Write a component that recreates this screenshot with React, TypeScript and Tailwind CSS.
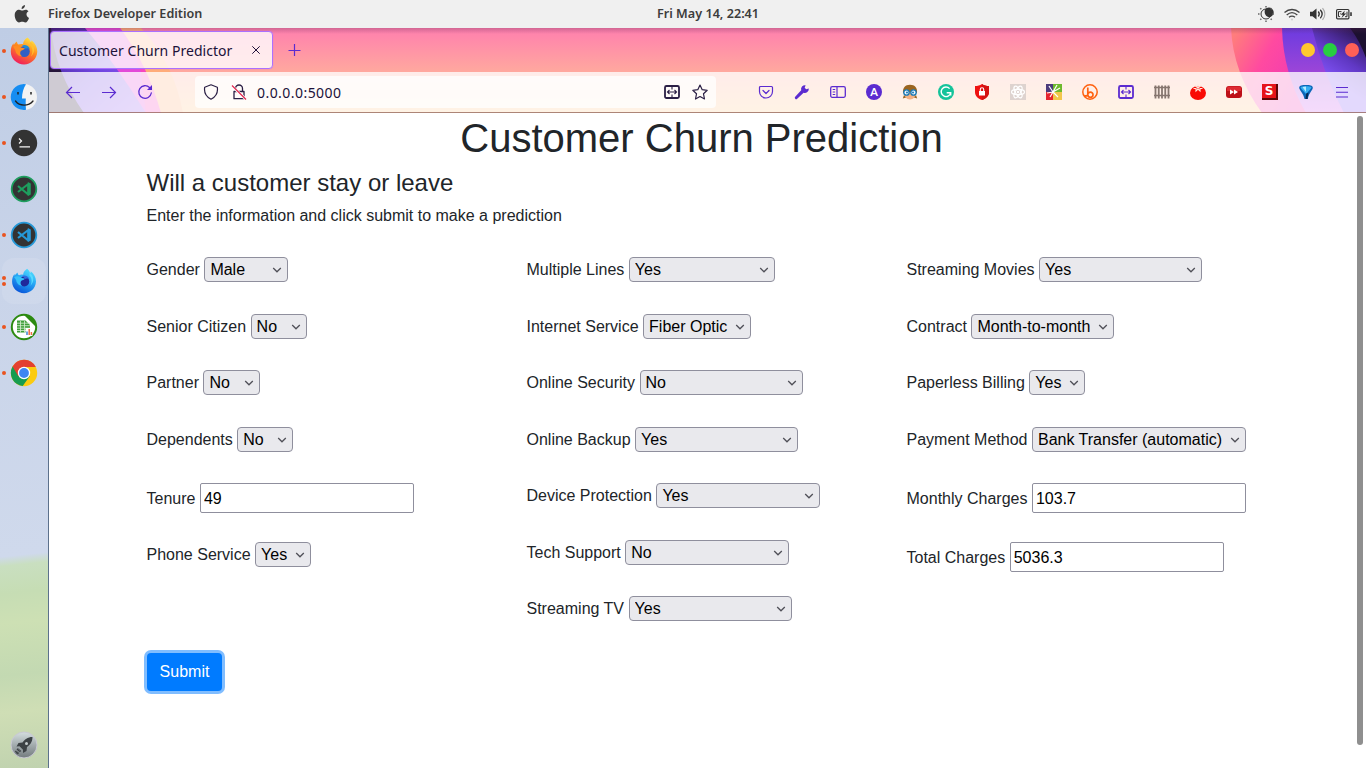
import type { ReactNode } from "react";

const ink = "#5b2bd0";

function Svg({ size = 16, vb = "0 0 16 16", children, className = "" }: { size?: number; vb?: string; children: ReactNode; className?: string }) {
  return (
    <svg width={size} height={size} viewBox={vb} fill="none" className={"shrink-0 " + className}>
      {children}
    </svg>
  );
}

function TopBar() {
  return (
    <header className="grid h-7 shrink-0 grid-cols-[1fr_auto_1fr] items-center bg-[#f0f0f0] font-['Noto_Sans',sans-serif] text-[12.600px] font-semibold text-[#3c3c3c]">
      <div className="flex items-center">
        <svg width="16" height="20" viewBox="0 0 16 20" className="ml-[14px] mr-[18px]" fill="#3c3c3c">
          <path d="M11 1c.2 2-1.500 4-3.400 4C7.400 3 9 1.300 11 1zM14.500 7.200C13 8 12.400 9.200 12.500 10.600c.1 1.600 1 2.700 2.500 3.300-.6 1.800-2 4.600-3.700 4.600-1.200 0-1.700-.7-3.100-.7s-2 .7-3.200.7C2.800 18.500.7 14.800.7 11.300.7 7.700 2.900 5.800 5.100 5.800c1.300 0 2.300.8 3.100.8.9 0 2-.9 3.500-.9 1.200 0 2.200.6 2.800 1.500z" />
        </svg>
        <span className="whitespace-nowrap">Firefox Developer Edition</span>
      </div>
      <span className="w-[103px] translate-x-[25px] whitespace-nowrap text-center tracking-[0.02px]">Fri May 14, 22:41</span>
      <div className="flex items-center justify-end gap-[10px] pr-[14px]">
        <Svg>
          <circle cx="8" cy="8" r="5" stroke="#333" strokeWidth="1" />
          <path d="M7 3.500A4.800 4.800 0 1 1 12 11C9 11.500 5.500 8 7 3.500z" fill="#333" />
          <path d="M8 0v1.500M8 14.500V16M0 8h1.500M14.500 8H16M2.300 2.300l1 1M12.700 12.700l1 1M13.700 2.300l-1 1M3.300 12.700l-1 1" stroke="#666" strokeWidth="1.500" />
        </Svg>
        <Svg>
          <path d="M.5 6.500C5 2.500 11 2.500 15.500 6.500M2.700 9C6 6 10 6 13.300 9M5 11.300c2-1.600 4-1.600 6 0" stroke="#444" strokeWidth="1.300" />
          <circle cx="8" cy="13.500" r="1" fill="#ccc" />
        </Svg>
        <Svg>
          <path d="M0 5.800h2.500L6.500 2.500v11L2.500 10.200H0z" fill="#333" />
          <path d="M8.300 5.500c1.200 1.500 1.200 3.500 0 5M10.300 3.800c2.200 2.500 2.200 5.900 0 8.400" stroke="#333" strokeWidth="1.300" />
          <path d="M12.500 2.200c3 3.500 3 8.100 0 11.600" stroke="#aaa" strokeWidth="1.300" />
        </Svg>
        <Svg>
          <rect x=".6" y="3.500" width="12.300" height="9.300" rx="1" stroke="#333" strokeWidth="1.200" />
          <path d="M14.200 6.300h1.600v3.600h-1.600z" fill="#333" />
          <path d="M5.500 5.600h-3v5h1.600M11 5.700v5H9M4.200 7.800h1" stroke="#333" strokeWidth="1" />
          <path d="M8.800 4.500L4.800 8.700h2.100L5.500 12l4.800-4.600H8z" fill="#333" />
        </Svg>
      </div>
    </header>
  );
}

function FoxIcon({ blue = false }: { blue?: boolean }) {
  const id = blue ? "foxb" : "foxo";
  return (
    <Svg size={28} vb={blue ? "-1.500 -1.500 31 31" : "0 0 28 28"}>
      <defs>
        <linearGradient id={id} x1=".8" y1="0" x2=".3" y2="1">
          <stop offset="0" stopColor={blue ? "#55e3ff" : "#fff04a"} />
          <stop offset=".45" stopColor={blue ? "#27a7f5" : "#ff8a1c"} />
          <stop offset="1" stopColor={blue ? "#0753d8" : "#f0195f"} />
        </linearGradient>
      </defs>
      <path d="M17.500.5c2 1.700 3 3.300 3.300 5 .6-.9.700-1.500.6-2.200C25 6 27.300 10 27.300 14.500 27 22 21 27.500 14 27.500S.8 22 .8 14.500c0-3.500 1-6.200 2.700-8.300l.3 2C4.500 6.500 5.500 5.600 7 4.500c0 1.500.5 2.500 1.500 3 1.300-.6 3-.7 4.500-.4.300-3 2-5 4.500-6.600z" fill={`url(#${id})`} />
      <circle cx="14.300" cy="14.500" r="5.500" fill={blue ? "#20289b" : "#315fc4"} />
      <path d="M12 8.500c3-1.500 7 .3 8 3.500-1.500-1-3-.8-4.300-.2z" fill={blue ? "#2f6de0" : "#1d8fd8"} />
      <path d="M3 9.500c3-1.500 6-.8 8.500 1.200l3.300.5c-.2 1.800-3.300 1.500-4.300 3.300-.8 2-.1 3.600 1.500 4.700-3.500.2-6.500-2.700-6.700-6.200z" fill={blue ? "#36c1fa" : "#ff8d22"} />
      <path d="M20 8c3 3 3.300 8 .8 11.500C26 15 25 8 20 5z" fill={blue ? "#58dbff" : "#ffbf2c"} />
    </Svg>
  );
}

function CodeIcon({ color }: { color: string }) {
  return (
    <Svg size={28} vb="0 0 28 28">
      <circle cx="14" cy="14" r="12.300" fill="#333" stroke={color} strokeWidth="1.800" />
      <path d="M18.300 9v10.500L8 11M18.300 9L8 17" stroke={color} strokeWidth="2.200" strokeLinejoin="round" />
      <path d="M17.800 7l3 1.500v11l-3 1.500z" fill={color} />
    </Svg>
  );
}

function Dock() {
  const icons: { dots: number; icon: ReactNode }[] = [
    { dots: 1, icon: <FoxIcon /> },
    {
      dots: 1,
      icon: (
        <Svg size={28} vb="0 0 28 28">
          <circle cx="14" cy="14" r="13" fill="#f3f3f3" />
          <path d="M16 1.200A13 13 0 1 0 16 26.800C15.700 23 15.600 20 15.800 15.500H12C12 10 13.500 5 16 1.200z" fill="#168df2" />
          <path d="M5.500 18c4 5.500 13 5.500 17.500 0" stroke="#222" strokeWidth="1.300" strokeLinecap="round" />
          <path d="M8 9v2.500M21 9v2.500" stroke="#222" strokeWidth="1.500" />
        </Svg>
      ),
    },
    {
      dots: 1,
      icon: (
        <Svg size={28} vb="0 0 28 28">
          <circle cx="14" cy="14" r="13.200" fill="#333" />
          <path d="M9 9.500l2.500 2.500L9 14.500M9.500 17.800h10.500" stroke="#f5f5f5" strokeWidth="1.200" />
        </Svg>
      ),
    },
    { dots: 0, icon: <CodeIcon color="#1e9e5e" /> },
    { dots: 1, icon: <CodeIcon color="#2699d8" /> },
    { dots: 2, icon: <FoxIcon blue /> },
    {
      dots: 1,
      icon: (
        <Svg size={28} vb="0 0 28 28">
          <circle cx="14" cy="14" r="12.200" fill="#fff" stroke="#2c8a10" strokeWidth="2" />
          <path d="M14 2A12 12 0 0 1 26 14z" fill="#2c8a10" />
          <path d="M7 7.500h8.500l4.500 4.500V19.500H7z" fill="#3f9e3a" />
          <path d="M7 10.200h13M7 12.700h13M7 15.200h13M7 17.500h13M10.500 8v11.500M14.500 8v11.500" stroke="#d9efd4" strokeWidth=".8" />
          <path d="M15.500 15h7v8h-7z" fill="#fff" />
          <path d="M19.200 16v6M21.400 19v3" stroke="#ef6b43" strokeWidth="1.500" />
          <path d="M17 18.500V22" stroke="#3d83d5" strokeWidth="1.500" />
        </Svg>
      ),
    },
    {
      dots: 1,
      icon: (
        <Svg size={28} vb="0 0 28 28">
          <circle cx="14" cy="14" r="13.200" fill="#fbcb10" />
          <path d="M14 14L2.600 7.400A13.200 13.200 0 0 0 12.700 27.100L19.700 17.300z" fill="#169c50" />
          <path d="M14 14V8h11.800A13.200 13.200 0 0 0 2.600 7.400L8.300 17.300z" fill="#e3402f" />
          <circle cx="14" cy="14" r="6.200" fill="#fff" />
          <circle cx="14" cy="14" r="4.900" fill="#3f86f2" />
        </Svg>
      ),
    },
  ];
  return (
    <aside className="flex w-[49px] shrink-0 flex-col border-r border-[#5c718c] bg-[linear-gradient(174deg,#bfcde5_0%,#c9d4e9_35%,#cfd9ec_71%,#c9dfc0_72.300%,#c6ddb4_76%,#cde0b4_80%,#c3d9b2_87%,#cfdeb5_92%,#c0d2af_100%)]">
      {icons.map((it, i) => (
        <div key={i} className={"flex h-[46px] items-center " + (it.dots === 2 ? "ml-[2px] mr-[2px] rounded-xl bg-white/10" : "pl-[2px]")}>
          <span className="flex w-[4px] flex-col gap-[2px]">
            {Array.from({ length: it.dots }, (_, d) => (
              <span key={d} className="size-1 rounded-full bg-[#e95420]" />
            ))}
          </span>
          <span className="ml-1">{it.icon}</span>
        </div>
      ))}
      <div className="mb-[9px] ml-[10px] mt-auto">
        <Svg size={28} vb="0 0 28 28">
          <defs>
            <linearGradient id="rocket" x1="0" y1="0" x2="0" y2="1">
              <stop stopColor="#d4dedf" />
              <stop offset="1" stopColor="#727a7d" />
            </linearGradient>
          </defs>
          <circle cx="14" cy="14" r="13" fill="url(#rocket)" stroke="#c9c9d3" />
          <path d="M22.500 6c-5 0-8 2.500-10 5.500l-4 .5-2 3.500 3-.2 3.500 3.500v3.200l3.500-2 .5-4C20 14 22.500 11 22.500 6z" fill="#3c4245" />
          <path d="M8.300 17.500l-3 3.500M10.800 19.500l-3.500 3.500M9.500 18.500l-3.500 4" stroke="#3c4245" strokeWidth="1.200" strokeDasharray="2 1" />
          <circle cx="16.500" cy="12.500" r="1.500" fill="#c4cccd" />
        </Svg>
      </div>
    </aside>
  );
}

function ThemeArt() {
  return (
    <svg className="absolute inset-0 h-full w-full" viewBox="0 0 1317 85" preserveAspectRatio="none">
      <defs>
        <linearGradient id="sky" x1="0" y1="0" x2="0" y2="1">
          <stop offset="0" stopColor="#ff7fae" />
          <stop offset=".5" stopColor="#ffa79f" />
          <stop offset="1" stopColor="#ffc888" />
        </linearGradient>
        <linearGradient id="hot" gradientUnits="userSpaceOnUse" x1="1184" y1="10" x2="1256" y2="50">
          <stop offset="0" stopColor="#ff7d7c" />
          <stop offset=".45" stopColor="#ff4aa0" />
          <stop offset="1" stopColor="#ef3ab4" />
        </linearGradient>
        <linearGradient id="pur" x1="0" y1="0" x2="0" y2="1">
          <stop offset="0" stopColor="#6b3be0" />
          <stop offset=".5" stopColor="#9a45d8" />
          <stop offset="1" stopColor="#d05cf0" />
        </linearGradient>
        <linearGradient id="vio" gradientUnits="userSpaceOnUse" x1="1310" y1="5" x2="1280" y2="50">
          <stop offset="0" stopColor="#2f1858" />
          <stop offset=".55" stopColor="#6038c4" />
          <stop offset="1" stopColor="#8052f5" />
        </linearGradient>
        <linearGradient id="lpur" x1="0" y1="0" x2="1" y2="1">
          <stop offset="0" stopColor="#3c1c80" />
          <stop offset=".5" stopColor="#6f45e0" />
          <stop offset="1" stopColor="#9c60f0" />
        </linearGradient>
        <linearGradient id="shade" x1="0" y1="0" x2="0" y2="1">
          <stop stopColor="#5c2650" stopOpacity=".28" />
          <stop offset="1" stopColor="#5c2650" stopOpacity="0" />
        </linearGradient>
      </defs>
      <path d="M0 0h1317v85H0z" fill="url(#sky)" />
      <path d="M0 0h92Q125 35 134 85H0z" fill="#ffac79" />
      <path d="M0 0h71Q98 35 112 85H0z" fill="#f646bd" />
      <path d="M0 0h71Q82 15 92 44L97 85H0z" fill="#e349d8" />
      <path d="M0 0h36Q66 35 97 85H0z" fill="url(#lpur)" />
      <path d="M0 0h2Q6 44 35 85H0z" fill="#251438" />
      <path d="M1182 0Q1184 45 1213 85H1317V0z" fill="url(#hot)" />
      <path d="M1233 0Q1234 45 1257 85H1317V0z" fill="url(#pur)" />
      <path d="M1263 0Q1274 45 1295 85H1317V0z" fill="url(#vio)" />
      <path d="M1301 0Q1311 13 1317 30V0z" fill="#1c1030" />
      <path d="M0 0h1317v6H0z" fill="url(#shade)" />
    </svg>
  );
}

function SplitIcon({ color }: { color: string }) {
  return (
    <Svg>
      <rect x="1" y="2" width="14" height="12" rx="1.500" stroke={color} strokeWidth="1.800" />
      <path d="M8 2v3.500M8 10.500V14M3.500 8h9M5.500 6l-2 2 2 2M10.500 6l2 2-2 2" stroke={color} strokeWidth="1.100" />
    </Svg>
  );
}

const extensions: ReactNode[] = [
  <Svg><path d="M2.500 2.500h11a1 1 0 0 1 1 1V7.500a6.500 6.500 0 0 1-13 0V3.500a1 1 0 0 1 1-1zM5 6.500l3 3 3-3" stroke={ink} strokeWidth="1.200" strokeLinecap="round" strokeLinejoin="round" /></Svg>,
  <Svg><path d="M14.800 4.500l-2.600.8-1.500-1.500.9-2.600A4 4 0 0 0 7.200 6.300L1.200 12.700a1.400 1.400 0 0 0 2 2L9.600 8.700A4 4 0 0 0 14.800 4.500z" fill={ink} /></Svg>,
  <Svg><rect x=".7" y="2.700" width="14.600" height="10.600" rx="1.500" stroke={ink} strokeWidth="1.300" /><path d="M7 3v10M2.700 5.500h2.500M2.700 8h2.500M2.700 10.500h2.500" stroke={ink} strokeWidth="1.200" /></Svg>,
  <span className="flex size-4 items-center justify-center rounded-full bg-[#5b2bd0] font-['Lato',sans-serif] text-[11px] font-bold text-white">A</span>,
  <Svg><path d="M1 9C.5 4 3 .8 8 .8S15.500 4 15 9z" fill="#9a6420" /><path d="M2 8h12c0 4.500-2.500 7.500-6 7.500S2 12.500 2 8z" fill="#f4b183" /><path d="M2 11L.8 14.500 4 13.500zM14 11l1.200 3.500L12 13.500z" fill="#9a6420" /><circle cx="4.500" cy="8.500" r="2.700" fill="#e8f4fc" stroke="#1677b5" strokeWidth="1.300" /><circle cx="11.500" cy="8.500" r="2.700" fill="#e8f4fc" stroke="#1677b5" strokeWidth="1.300" /><circle cx="5" cy="8.500" r="1" fill="#1677b5" /><circle cx="11" cy="8.500" r="1" fill="#1677b5" /></Svg>,
  <Svg><circle cx="8" cy="8" r="8" fill="#15c39a" /><path d="M11.600 4.600A4.800 4.800 0 1 0 12.700 8.800M8.700 8.800h4v2.700" stroke="#fff" strokeWidth="1.400" /></Svg>,
  <Svg><path d="M8 0c2 1.500 4.500 2 7 2V8c0 4-3 6.700-7 8-4-1.300-7-4-7-8V2c2.500 0 5-.5 7-2z" fill="#ee1111" /><path d="M8 0c2 1.500 4.500 2 7 2V8c0 4-3 6.700-7 8z" fill="#d41212" /><rect x="5" y="7" width="6" height="4.500" fill="#fff" /><path d="M6.300 7V5.500a1.700 1.700 0 0 1 3.400 0V7" stroke="#fff" strokeWidth="1.100" /></Svg>,
  <Svg><path d="M0 0h16v16H0z" fill="#ded3cf" /><g stroke="#fff" strokeWidth="1.200"><ellipse cx="8" cy="8" rx="6.500" ry="2.600" /><ellipse cx="8" cy="8" rx="6.500" ry="2.600" transform="rotate(60 8 8)" /><ellipse cx="8" cy="8" rx="6.500" ry="2.600" transform="rotate(120 8 8)" /></g><circle cx="8" cy="8" r="1.200" fill="#fff" /></Svg>,
  <Svg><path d="M0 0h7v8H0z" fill="#4c3b7c" /><path d="M7 0h9v8H7z" fill="#6db92e" /><path d="M0 8h7v8H0z" fill="#e62530" /><path d="M7 8h9v8H7z" fill="#f2c64b" /><path d="M3 2l4 6M11 1L7 8l7-4M1 9l6-1-3 5M7 8l5 5" stroke="#fff" strokeWidth="1.200" /></Svg>,
  <Svg><circle cx="8" cy="8" r="7.200" stroke="#ff6110" strokeWidth="1.500" /><path d="M5.800 3.500v7.200M5.800 10.700a2.600 2.600 0 1 1 5.200 0 2.600 2.600 0 0 1-5.200 0M2.300 11.500c1.500 1 2.600.5 3.500-.8" stroke="#ff6110" strokeWidth="1.700" /></Svg>,
  <SplitIcon color={ink} />,
  <Svg><path d="M1.500 1.500v13M4.750 1.500v13M8 1.500v13M11.250 1.500v13M14.500 1.500v13" stroke="#86766f" strokeWidth="1.800" /><path d="M0 3.500h16M0 11.500h16" stroke="#86766f" strokeWidth="1.300" /></Svg>,
  <Svg><ellipse cx="8" cy="9" rx="8" ry="7" fill="#f90b05" /><path d="M3.500 4.500l2.500 0 0 2.500 2-2 2 2 0-2.500h2.500M8 5V.5M5 1.500L8 4l3-2.500" stroke="#ffe4da" strokeWidth="1.100" /></Svg>,
  <Svg><rect y="2" width="16" height="12" rx="3" fill="#bd1018" /><path d="M1 4a2 2 0 0 1 2-1.500h10A2 2 0 0 1 15 4v3H1z" fill="#de2b32" /><path d="M4 5.500L8 8l-4 2.500zM8 5.500L12 8l-4 2.500z" fill="#fff" /></Svg>,
  <span className="flex size-4 items-start border-b-2 border-r-2 border-[#5e0608] bg-[#e6141a]"><span className="w-full text-center font-['DejaVu_Sans',sans-serif] text-[12px] font-bold leading-[14px] text-white">S</span></span>,
  <Svg><path d="M1.200 3.500C1.500 1.500 4 1 8 1s6.500.5 6.800 2.500C15 6 11 8.500 9.800 15H6.500C5.500 9 1 6 1.200 3.500z" fill="#0b66b8" /><path d="M2.500 3.300C4 2 12 2 13.500 3.300 13 5.500 10 7 8.800 9.500H7.300C6 7 3 5.500 2.500 3.300z" fill="#35aef2" /><path d="M4.500 3l3.500-.6V8z" fill="#b4ebff" /><path d="M8.200 9.500l2.300-1-1 6.500H7.500z" fill="#052b55" /></Svg>,
  <Svg><path d="M2 3.500h12M2 8.300h12M2 13h12" stroke={ink} strokeWidth="1.100" /></Svg>,
];

function BrowserChrome() {
  return (
    <div className="relative h-[85px] shrink-0 font-['Noto_Sans',sans-serif]">
      <ThemeArt />
      <div className="relative flex h-11 items-center pl-[1px]">
        <div className="flex h-[38px] w-[223px] items-center justify-between rounded-[4px] border border-[#ab71ff] bg-white/80 pl-2 pr-[10px] text-[14px] tracking-[0.04px] text-[#20123a] shadow-[0_0_1px_#ab71ff]">
          <span className="whitespace-nowrap">Customer Churn Predictor</span>
          <Svg size={12} vb="0 0 12 12"><path d="M2.300 2.300l7.400 7.400M9.700 2.300L2.300 9.700" stroke="#20123a" strokeWidth="1" /></Svg>
        </div>
        <Svg className="ml-[14px]"><path d="M7.500 2v12M1.500 8.500h12" stroke={ink} strokeWidth="1.200" /></Svg>
        <div className="ml-auto flex gap-2 pr-[7px]">
          <span className="size-[14px] rounded-full bg-[#ffc82e]" />
          <span className="size-[14px] rounded-full bg-[#28cd41]" />
          <span className="size-[14px] rounded-full bg-[#ff6057]" />
        </div>
      </div>
      <div className="relative flex h-[41px] items-center border-b border-[#8a5548]/70 bg-white/[0.78] pl-[6px]">
        <span className="flex w-9 justify-center"><Svg><path d="M15 8.500H1.500M7 3L1.500 8.500 7 14" stroke={ink} strokeWidth="1.200" /></Svg></span>
        <span className="flex w-9 justify-center"><Svg><path d="M1 8.500h13.500M9 3l5.500 5.500L9 14" stroke={ink} strokeWidth="1.200" /></Svg></span>
        <span className="flex w-9 justify-center"><Svg><path d="M12.500 3.500A6.300 6.300 0 1 0 14.300 9" stroke={ink} strokeWidth="1.300" strokeLinecap="round" /><path d="M15 1v5H10z" fill={ink} /></Svg></span>
        <div className="ml-8 flex h-8 w-[521px] items-center rounded-[4px] bg-white/75 pl-2 pr-2">
          <Svg><path d="M8 .8l6.300 2.400c.7 4.500-1 9.300-6.300 12C2.700 12.500 1 7.700 1.700 3.200z" stroke="#2b1f45" strokeWidth="1.200" strokeLinejoin="round" /></Svg>
          <Svg className="ml-3">
            <path d="M4.500 7V4.500a3.500 3.500 0 0 1 7 0V7M3 7.500h10v7.200H3z" stroke="#2b1f45" strokeWidth="1.300" strokeLinejoin="round" />
            <path d="M1 2l13.500 13" stroke="#fff" strokeWidth="2.600" />
            <path d="M1 1.500l14 14" stroke="#e22850" strokeWidth="1.300" />
          </Svg>
          <span className="ml-[10px] text-[14px] tracking-[0.45px] text-[#20123a]">0.0.0.0:5000</span>
          <div className="ml-auto flex gap-3">
            <SplitIcon color="#2b1f45" />
            <Svg><path d="M8 1l2.200 4.700 5 .6-3.700 3.500 1 5.200L8 12.500 3.500 15l1-5.200L.8 6.300l5-.6z" stroke="#2b1f45" strokeWidth="1.200" strokeLinejoin="round" /></Svg>
          </div>
        </div>
        <div className="ml-8 flex">
          {extensions.map((e, i) => (
            <span key={i} className="flex w-9 justify-center">{e}</span>
          ))}
        </div>
      </div>
    </div>
  );
}

type Field = { label: string; value: string; width: number; input?: boolean };

const columns: Field[][] = [
  [
    { label: "Gender", value: "Male", width: 84 },
    { label: "Senior Citizen", value: "No", width: 56 },
    { label: "Partner", value: "No", width: 56.5 },
    { label: "Dependents", value: "No", width: 56 },
    { label: "Tenure", value: "49", width: 214, input: true },
    { label: "Phone Service", value: "Yes", width: 56 },
  ],
  [
    { label: "Multiple Lines", value: "Yes", width: 146 },
    { label: "Internet Service", value: "Fiber Optic", width: 108 },
    { label: "Online Security", value: "No", width: 163.5 },
    { label: "Online Backup", value: "Yes", width: 163 },
    { label: "Device Protection", value: "Yes", width: 163.5 },
    { label: "Tech Support", value: "No", width: 163.5 },
    { label: "Streaming TV", value: "Yes", width: 163.3 },
  ],
  [
    { label: "Streaming Movies", value: "Yes", width: 163 },
    { label: "Contract", value: "Month-to-month", width: 143 },
    { label: "Paperless Billing", value: "Yes", width: 56 },
    { label: "Payment Method", value: "Bank Transfer (automatic)", width: 214 },
    { label: "Monthly Charges", value: "103.7", width: 214, input: true },
    { label: "Total Charges", value: "5036.3", width: 214, input: true },
  ],
];

function FormField({ label, value, width, input }: Field) {
  return (
    <label className={"flex items-center gap-[4.5px] whitespace-nowrap " + (input ? "mb-[29px] h-[30px]" : "mb-[31px] h-[25px] odd:mb-[32px]")}>
      <span className={input ? "pt-[2px]" : ""}>{label}</span>
      {input ? (
        <input defaultValue={value} style={{ width }} className="h-[30px] rounded-[2px] border border-[#8f8f9d] bg-white pl-[3px] pt-[2px] text-black" />
      ) : (
        <span className="relative block h-[25px]" style={{ width }}>
          <select className="block h-full w-full appearance-none rounded-[4px] border border-[#8f8f9d] bg-[#e9e9ed] pl-[5px] text-black">
            <option>{value}</option>
          </select>
          <svg width="10" height="6" viewBox="0 0 10 6" className="pointer-events-none absolute right-[6px] top-[10px]" fill="none">
            <path d="M1.200 1L5 4.800 8.800 1" stroke="#505058" strokeWidth="1.300" />
          </svg>
        </span>
      )}
    </label>
  );
}

export default function App() {
  return (
    <div className="flex h-[768px] w-[1366px] flex-col overflow-hidden bg-white">
      <TopBar />
      <div className="flex min-h-0 flex-1">
        <Dock />
        <div className="flex min-w-0 flex-1 flex-col">
          <BrowserChrome />
          <div className="flex min-h-0 flex-1 justify-between bg-white">
            <main className="w-[1305px] px-[97.500px] font-['Liberation_Sans',Arial,sans-serif] text-base text-[#212529]">
              <h1 className="pt-px text-center text-[40px] leading-[48px]">Customer Churn Prediction</h1>
              <h2 className="mt-[6px] text-[24px] leading-[29px]">Will a customer stay or leave</h2>
              <p className="mt-[7px] leading-6">Enter the information and click submit to make a prediction</p>
              <div className="mt-[29px] grid h-[396px] grid-cols-[380px_380px_350px] items-start">
                {columns.map((fields, i) => (
                  <div key={i}>
                    {fields.map((f) => (
                      <FormField key={f.label} {...f} />
                    ))}
                  </div>
                ))}
              </div>
              <button className="h-[38px] w-[75px] rounded-[4px] bg-[#007bff] pl-px text-center text-white shadow-[0_0_0_3px_#80bdff]">Submit</button>
            </main>
            <div className="mr-[3px] mt-[3px] h-[629px] w-[6px] rounded-full bg-[#8f8f8f]" />
          </div>
        </div>
      </div>
    </div>
  );
}
